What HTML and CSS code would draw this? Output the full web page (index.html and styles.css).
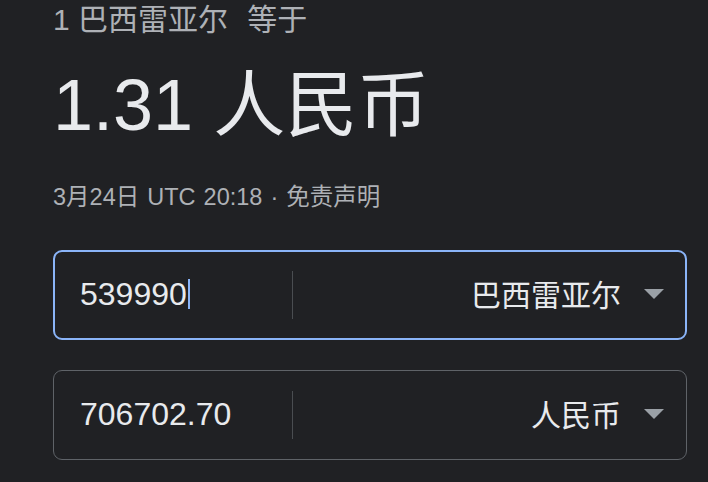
FILE: index.html
```html
<!DOCTYPE html>
<html lang="zh-CN">
<head>
<meta charset="utf-8">
<link rel="stylesheet" href="styles.css">
</head>
<body>
<div class="page">
  <div class="from-line">1 巴西雷亚尔 <span class="equals">等于</span></div>
  <div class="result">1.31 人民币</div>
  <div class="date">3月24日 UTC 20:18 · 免责声明</div>
  <div class="fields">
    <div class="field focused">
      <div class="amount"><span class="value">539990</span><span class="caret"></span></div>
      <div class="divider"></div>
      <div class="currency">
        <span class="name">巴西雷亚尔</span>
        <span class="arrow"></span>
      </div>
    </div>
    <div class="field">
      <div class="amount"><span class="value">706702.70</span></div>
      <div class="divider"></div>
      <div class="currency">
        <span class="name">人民币</span>
        <span class="arrow"></span>
      </div>
    </div>
  </div>
</div>
</body>
</html>
```
FILE: styles.css
```css
html, body {
  margin: 0;
  padding: 0;
  background: #202124;
  height: 100%;
  overflow: hidden;
}
body {
  font-family: "Liberation Sans", Arial, "Noto Sans CJK SC", sans-serif;
}
.page {
  padding: 0 21px 0 53px;
}
.from-line {
  font-size: 30px;
  line-height: 40px;
  height: 40px;
  color: #aeb1b6;
  white-space: nowrap;
}
.equals {
  margin-left: 11px;
}
.result {
  font-size: 72px;
  line-height: 80px;
  color: #e8eaed;
  margin-top: 25px;
  white-space: nowrap;
}
.date {
  font-size: 23.5px;
  line-height: 30px;
  color: #aeb1b6;
  margin-top: 37px;
  word-spacing: 1.5px;
  white-space: nowrap;
}
.fields {
  display: flex;
  flex-direction: column;
  gap: 30px;
  margin-top: 38px;
}
.field {
  display: flex;
  align-items: center;
  height: 90px;
  box-sizing: border-box;
  border: 1px solid #5f6368;
  border-radius: 9px;
  padding: 0 22px 0 26px;
}
.field.focused {
  border: 2px solid #8ab4f8;
  padding: 0 21px 0 25px;
}
.amount {
  width: 212px;
  display: flex;
  align-items: center;
  font-size: 32px;
  color: #e8eaed;
  margin-top: -2px;
}
.caret {
  display: inline-block;
  width: 2px;
  height: 30px;
  background: #8ab4f8;
  margin-left: 1px;
}
.divider {
  width: 1px;
  height: 48px;
  background: #4a4d51;
}
.currency {
  flex: 1;
  display: flex;
  align-items: center;
  justify-content: flex-end;
  gap: 22px;
  font-size: 30px;
  color: #e8eaed;
}
.name {
  margin-top: -5px;
  margin-right: 1px;
}
.arrow {
  width: 0;
  height: 0;
  border-left: 10px solid transparent;
  border-right: 10px solid transparent;
  border-top: 10px solid #9aa0a6;
  margin-top: -2px;
}
```
